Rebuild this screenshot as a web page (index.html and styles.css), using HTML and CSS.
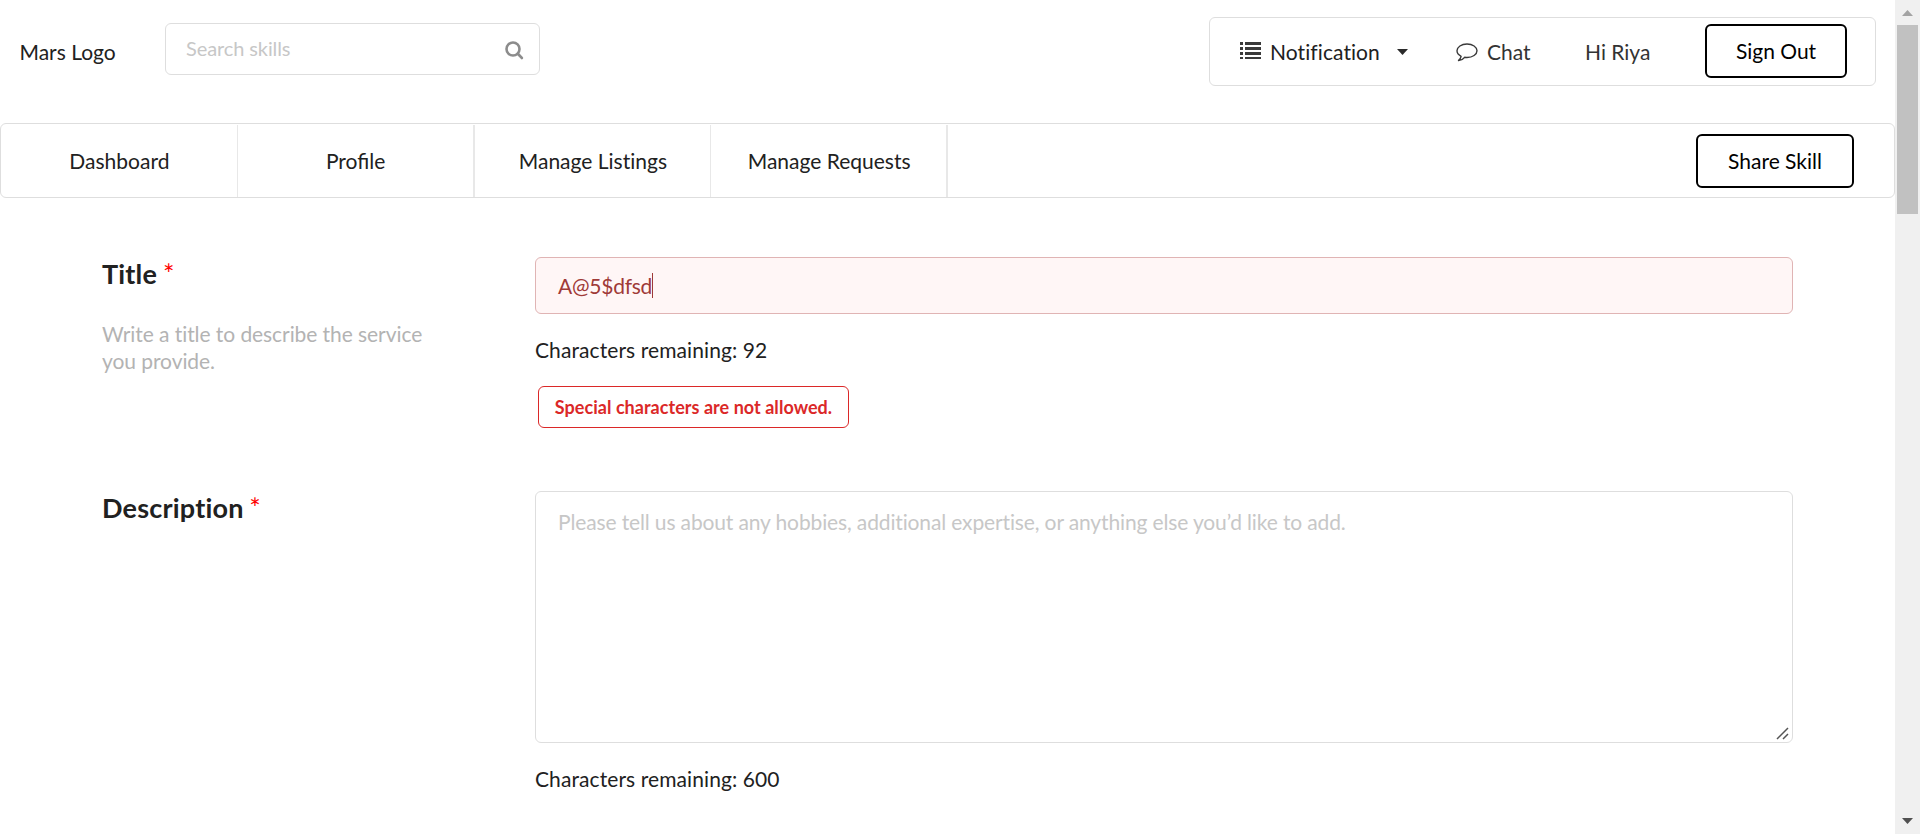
FILE: index.html
```html
<!DOCTYPE html>
<html lang="en">
<head>
<meta charset="utf-8">
<title>Share Skill</title>
<link rel="stylesheet" href="styles.css">
</head>
<body>
<div class="window">
  <div class="page">
    <header class="header">
      <a class="logo">Mars Logo</a>
      <div class="search">
        <span class="search-text">Search skills</span>
        <svg class="search-icon" width="19" height="19" viewBox="0 0 19 19"><circle cx="8" cy="8" r="6.500" fill="none" stroke="#8c8c8c" stroke-width="2.600"/><path d="M12.800 12.700l4 4.200" stroke="#8c8c8c" stroke-width="2.800" stroke-linecap="round"/></svg>
      </div>
      <div class="account">
        <svg class="list-icon" width="22" height="18" viewBox="0 0 22 18" fill="#3a3a3a"><path d="M0 0h3v3H0zM5 0h16v3H5zM0 5h3v3H0zM5 5h16v3H5zM0 10h3v3H0zM5 10h16v3H5zM0 15h3v2H0zM5 15h16v2H5z"/></svg>
        <span class="notification">Noti<span class="lig">fi</span>cation</span>
        <svg class="caret-icon" width="11" height="6" viewBox="0 0 11 6" fill="#2b2b2b"><path d="M0 0h11L5.500 6z"/></svg>
        <svg class="chat-icon" width="22" height="19" viewBox="0 0 22 19"><path d="M11 1C5.400 1 1 4.100 1 7.800c0 2.200 1.600 4.200 4.100 5.500C4.800 15 4 16.300 2.500 17.600c2.600-.300 4.700-1.300 6.100-3.300.800.100 1.600.200 2.400.200 5.600 0 10-3 10-6.700S16.600 1 11 1z" fill="none" stroke="#3a3a3a" stroke-width="1.400" stroke-linejoin="round"/></svg>
        <span class="chat">Chat</span>
        <span class="user">Hi Riya</span>
        <button class="button sign-out">Sign Out</button>
      </div>
    </header>
    <nav class="nav">
      <a class="nav-item">Dashboard</a>
      <a class="nav-item wide-rule lig">Profile</a>
      <a class="nav-item">Manage Listings</a>
      <a class="nav-item wide-rule">Manage Requests</a>
      <button class="button share">Share Skill</button>
    </nav>
    <main class="form">
      <section class="row title-row">
        <div class="info">
          <h3 class="heading">Title <span class="required">*</span></h3>
          <p class="hint">Write a title to describe the service you provide.</p>
        </div>
        <div class="field">
          <div class="input error"><span>A@5$dfsd</span><i class="cursor"></i></div>
          <p class="remaining">Characters remaining: 92</p>
          <div class="message">Special characters are not allowed.</div>
        </div>
      </section>
      <section class="row">
        <div class="info">
          <h3 class="heading">Description <span class="required">*</span></h3>
        </div>
        <div class="field">
          <div class="textarea">
            <span>Please tell us about any hobbies, additional expertise, or anything else you’d like to add.</span>
            <svg class="grip" width="13" height="13" viewBox="0 0 13 13" stroke="#555" stroke-width="1.500"><path d="M1 12L12 1M7 12l5-5"/></svg>
          </div>
          <p class="remaining">Characters remaining: 600</p>
        </div>
      </section>
    </main>
  </div>
  <div class="scrollbar">
    <svg width="11" height="6" viewBox="0 0 11 6" fill="#a3a3a3"><path d="M0 6h11L5.500 0z"/></svg>
    <div class="thumb"></div>
    <svg class="down" width="11" height="6" viewBox="0 0 11 6" fill="#505050"><path d="M0 0h11L5.500 6z"/></svg>
  </div>
</div>
</body>
</html>
```
FILE: styles.css
```css
* { box-sizing: border-box; }
body {
  margin: 0;
  overflow: hidden;
  background: #fff;
  color: #212121;
  font: 21px/30px Lato, "Liberation Sans", sans-serif;
  font-variant-ligatures: none;
}
p, h3 { margin: 0; }
svg { display: block; flex: none; }
span, a, button { white-space: nowrap; }
.lig { font-variant-ligatures: normal; }
.window { display: flex; height: 834px; overflow: hidden; }
.page { width: 1895px; flex: none; }
.header { display: flex; align-items: flex-start; height: 123px; padding-top: 17px; }
.logo { flex: none; width: 145.500px; margin: 20px 0 0 19.500px; }
.search {
  display: flex;
  flex: none;
  justify-content: space-between;
  width: 375px;
  height: 52px;
  margin-top: 6px;
  padding: 9px 15px 0 20px;
  border: 1px solid #dedede;
  border-radius: 6px;
}
.search-text { color: #c7c7c7; font-size: 20px; letter-spacing: -0.1px; }
.search-icon { margin-top: 8px; }
.account {
  display: flex;
  flex: none;
  align-items: center;
  width: 667px;
  height: 69px;
  margin-left: 669px;
  padding-left: 30px;
  border: 1px solid #dedede;
  border-radius: 6px;
}
.notification { width: 127px; margin-left: 8px; letter-spacing: 0.08px; }
.list-icon { margin-top: -2px; }
.caret-icon { margin-right: 48px; }
.chat-icon { margin-top: 2px; }
.chat { width: 98px; margin-left: 9px; color: #333; }
.user { width: 120px; color: #333; }
.button {
  height: 54px;
  padding: 0;
  border: 2px solid #000;
  border-radius: 6px;
  background: #fff;
  color: #000;
  font: inherit;
}
.sign-out { width: 142px; margin-top: -1px; }
.nav {
  display: flex;
  height: 75px;
  border: 1px solid #dedede;
  border-radius: 6px;
}
.nav-item {
  width: 236.750px;
  height: 72px;
  margin-top: 1px;
  padding: 21px 0 0 1px;
  border-right: 1px solid #e8e8e8;
  text-align: center;
}
.nav-item.wide-rule { border-right-width: 2px; }
.share { width: 158px; margin: 10px 40px 0 auto; }
.form { padding: 59px 102px 0; }
.row { display: flex; }
.title-row { height: 234px; }
.info { width: 433px; flex: none; }
.heading { font-size: 27px; line-height: 34px; font-weight: 700; letter-spacing: 0.2px; }
.required { margin-left: -1px; color: #f00; font-weight: 400; }
.hint { width: 335px; margin-top: 29px; color: #b3b3b3; line-height: 27px; letter-spacing: -0.07px; }
.field { width: 1258px; flex: none; }
.input {
  display: flex;
  align-items: center;
  height: 57px;
  padding-left: 22px;
  border: 1px solid #e0b4b4;
  border-radius: 6px;
  background: #fff6f6;
  color: #9f3a38;
  letter-spacing: -0.25px;
}
.cursor { width: 1px; height: 25px; background: #9f3a38; }
.remaining { margin-top: 21px; letter-spacing: 0.09px; }
.message {
  width: 311px;
  height: 42px;
  margin: 21px 0 0 3px;
  border: 1px solid #db2828;
  border-radius: 6px;
  color: #db2828;
  font-size: 18px;
  font-weight: 700;
  line-height: 40px;
  letter-spacing: 0.04px;
  text-align: center;
}
.textarea {
  position: relative;
  height: 252px;
  padding: 15px 22px;
  border: 1px solid #dedede;
  border-radius: 6px;
  color: #c7c7c7;
  letter-spacing: -0.135px;
}
.grip { position: absolute; right: 3px; bottom: 2px; }
.scrollbar {
  display: flex;
  flex-direction: column;
  align-items: center;
  width: 25px;
  padding: 10px 0;
  background: #f0f0f0;
}
.thumb { width: 21px; height: 189px; margin-top: 9px; background: #c1c1c1; }
.down { margin-top: auto; }
```
